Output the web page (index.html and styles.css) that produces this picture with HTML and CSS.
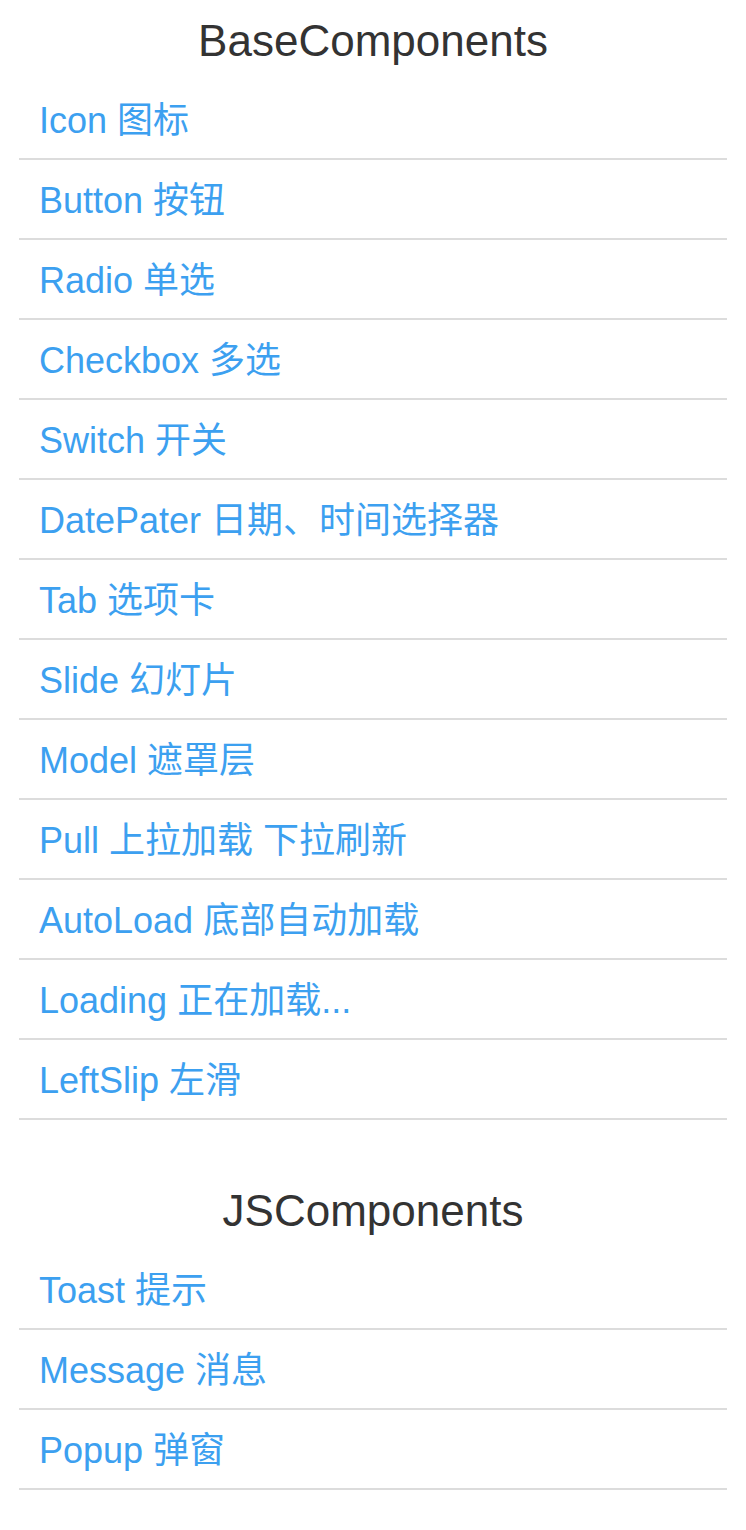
FILE: index.html
```html
<!DOCTYPE html>
<html lang="zh-CN">
<head>
<meta charset="utf-8">
<title>Components</title>
<link rel="stylesheet" href="styles.css">
</head>
<body>
<section class="section">
  <h2 class="title">BaseComponents</h2>
  <ul class="list">
    <li class="item"><a class="link" href="#">Icon 图标</a></li>
    <li class="item"><a class="link" href="#">Button 按钮</a></li>
    <li class="item"><a class="link" href="#">Radio 单选</a></li>
    <li class="item"><a class="link" href="#">Checkbox 多选</a></li>
    <li class="item"><a class="link" href="#">Switch 开关</a></li>
    <li class="item"><a class="link" href="#">DatePater 日期、时间选择器</a></li>
    <li class="item"><a class="link" href="#">Tab 选项卡</a></li>
    <li class="item"><a class="link" href="#">Slide 幻灯片</a></li>
    <li class="item"><a class="link" href="#">Model 遮罩层</a></li>
    <li class="item"><a class="link" href="#">Pull 上拉加载 下拉刷新</a></li>
    <li class="item"><a class="link" href="#">AutoLoad 底部自动加载</a></li>
    <li class="item"><a class="link" href="#">Loading 正在加载...</a></li>
    <li class="item"><a class="link" href="#">LeftSlip 左滑</a></li>
  </ul>
</section>
<section class="section section-js">
  <h2 class="title">JSComponents</h2>
  <ul class="list">
    <li class="item"><a class="link" href="#">Toast 提示</a></li>
    <li class="item"><a class="link" href="#">Message 消息</a></li>
    <li class="item"><a class="link" href="#">Popup 弹窗</a></li>
  </ul>
</section>
</body>
</html>
```

FILE: styles.css
```css
html, body {
  margin: 0;
  padding: 0;
  background: #fff;
}

body {
  font-family: "Liberation Sans", "Noto Sans CJK SC", sans-serif;
}

.section-js {
  margin-top: 50px;
}

.title {
  margin: 0;
  height: 80px;
  line-height: 82px;
  text-align: center;
  font-size: 44px;
  font-weight: normal;
  color: #333;
}

.list {
  list-style: none;
  margin: 0 19px;
  padding: 0;
}

.item {
  height: 78px;
  border-bottom: 2px solid #dcdcdc;
}

.link {
  display: block;
  padding-left: 20px;
  line-height: 82px;
  font-size: 36px;
  color: #3ca0f0;
  text-decoration: none;
}
```
